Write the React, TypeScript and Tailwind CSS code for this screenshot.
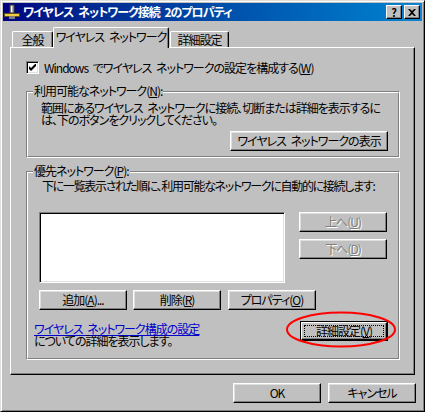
import type { ReactNode } from "react";

const FONT =
  "font-['Noto_Sans_CJK_JP',sans-serif] [font-feature-settings:'palt'] tracking-[-1px] [word-spacing:3px]";

function U({ children }: { children: ReactNode }) {
  return <span className="underline underline-offset-[1px]">{children}</span>;
}

function Btn({
  children,
  className = "",
  disabled = false,
}: {
  children: ReactNode;
  className?: string;
  disabled?: boolean;
}) {
  return (
    <div
      className={`flex h-[20px] w-[88px] shrink-0 items-center justify-center whitespace-nowrap border border-t-white border-l-white border-r-black border-b-black bg-[#c0c0c0] leading-none shadow-[inset_-1px_-1px_0_#808080,inset_1px_1px_0_#dfdfdf] ${
        disabled ? "text-[#808080] [text-shadow:1px_1px_0_#fff]" : "text-black"
      } ${className}`}
    >
      {children}
    </div>
  );
}

function Group({
  label,
  className = "",
  children,
}: {
  label: ReactNode;
  className?: string;
  children: ReactNode;
}) {
  return (
    <div
      className={`relative border border-t-[#808080] border-l-[#808080] border-r-white border-b-white ${className}`}
    >
      <div className="flex h-full flex-col border border-t-white border-l-white border-r-[#808080] border-b-[#808080]">
        {children}
      </div>
      <span className="absolute -top-[7px] left-[6px] whitespace-nowrap bg-[#c0c0c0] px-[1px] leading-[12px]">
        {label}
      </span>
    </div>
  );
}

function Tab({ label, active = false, className = "" }: { label: string; active?: boolean; className?: string }) {
  return (
    <div
      className={`relative flex items-center justify-center whitespace-nowrap rounded-t-[2px] border border-b-0 border-t-white border-l-white border-r-black bg-[#c0c0c0] shadow-[inset_-1px_0_0_#808080] ${
        active ? "z-10 -mb-px h-[21px] pb-[2px]" : "h-[16px]"
      } ${className}`}
    >
      {label}
    </div>
  );
}

function AppIcon() {
  return (
    <svg width="16" height="16" viewBox="0 0 16 16" className="shrink-0">
      <rect x="6" y="1" width="4" height="8" fill="#b0b0b0" stroke="#404040" strokeWidth="1" />
      <rect x="7" y="2" width="1" height="6" fill="#fff" />
      <rect x="0.5" y="9.5" width="15" height="3" fill="#f0d040" stroke="#605020" strokeWidth="1" />
      <rect x="5" y="12" width="6" height="3" fill="#808080" />
    </svg>
  );
}

export default function App() {
  return (
    <div
      className={`${FONT} flex h-[412px] w-[425px] flex-col border border-t-[#dfdfdf] border-l-[#dfdfdf] border-r-black border-b-black bg-[#c0c0c0] p-[2px] text-[12px] text-black shadow-[inset_1px_1px_0_#fff,inset_-1px_-1px_0_#808080]`}
    >
      {/* Title bar */}
      <div className="flex h-[18px] items-center bg-linear-to-r from-[#000080] to-[#1084d0] pl-[1px] pr-[2px]">
        <AppIcon />
        <span className="ml-[3px] whitespace-nowrap font-bold leading-none text-white">
          ワイヤレス ネットワーク接続 2のプロパティ
        </span>
        <div className="ml-auto flex gap-[1px]">
          <div className="flex h-[14px] w-[16px] items-center justify-center border border-t-white border-l-white border-r-black border-b-black bg-[#c0c0c0] text-[11px] font-bold leading-none tracking-normal shadow-[inset_-1px_-1px_0_#808080]">
            ?
          </div>
          <div className="ml-[1px] flex h-[14px] w-[16px] items-center justify-center border border-t-white border-l-white border-r-black border-b-black bg-[#c0c0c0] shadow-[inset_-1px_-1px_0_#808080]">
            <svg width="8" height="7" viewBox="0 0 8 7">
              <path d="M0 0h2l2 2 2-2h2L5 3.5 8 7H6L4 5 2 7H0l3-3.5z" fill="#000" />
            </svg>
          </div>
        </div>
      </div>

      {/* Tabs */}
      <div className="flex h-[26px] items-end pl-[9px]">
        <Tab label="全般" className="w-[41px]" />
        <Tab label="ワイヤレス ネットワーク" active className="w-[116px]" />
        <Tab label="詳細設定" className="ml-[1px] w-[59px]" />
      </div>

      {/* Tab panel */}
      <div className="mx-[7px] flex h-[328px] flex-col border border-t-white border-l-white border-r-black border-b-black pl-[15px] pr-[14px] shadow-[inset_-1px_-1px_0_#808080]">
        <div className="mt-[13px] flex h-[13px] items-center">
          <div className="flex h-[13px] w-[13px] items-center justify-center border border-t-[#808080] border-l-[#808080] border-r-white border-b-white bg-white shadow-[inset_1px_1px_0_#000,inset_-1px_-1px_0_#dfdfdf]">
            <svg width="7" height="7" viewBox="0 0 7 7">
              <path d="M0 2v3l2 2 5-5V-1L2 4z" fill="#000" />
            </svg>
          </div>
          <span className="ml-[5px] whitespace-nowrap leading-none">
            Windows でワイヤレス ネットワークの設定を構成する(<U>W</U>)
          </span>
        </div>

        <Group label={<>利用可能なネットワーク(<U>N</U>):</>} className="mt-[17px] h-[67px]">
          <div className="whitespace-nowrap pl-[13px] pt-[9px] leading-[12px]">
            範囲にあるワイヤレス ネットワークに接続、切断または詳細を表示するに
            <br />
            は、下のボタンをクリックしてください。
          </div>
          <Btn className="mr-[10px] mt-[5px] w-[158px] self-end">ワイヤレス ネットワークの表示</Btn>
        </Group>

        <Group label={<>優先ネットワーク(<U>P</U>):</>} className="mt-[13px] h-[189px]">
          <div className="whitespace-nowrap pl-[14px] pt-[7px] leading-[12px] tracking-[-1.3px]">
            下に一覧表示された順に、利用可能なネットワークに自動的に接続します:
          </div>
          <div className="mt-[20px] flex pl-[11px]">
            <div className="h-[71px] w-[246px] border border-t-[#808080] border-l-[#808080] border-r-white border-b-white bg-white shadow-[inset_1px_1px_0_#000,inset_-1px_-1px_0_#dfdfdf]" />
            <div className="ml-[14px] flex flex-col gap-[7px]">
              <Btn disabled>
                上へ(<U>U</U>)
              </Btn>
              <Btn disabled>
                下へ(<U>D</U>)
              </Btn>
            </div>
          </div>
          <div className="mt-[7px] flex gap-[6px] pl-[11px]">
            <Btn>
              追加(<U>A</U>)...
            </Btn>
            <Btn>
              削除(<U>R</U>)
            </Btn>
            <Btn className="ml-[1px]">
              プロパティ(<U>O</U>)
            </Btn>
          </div>
          <div className="mt-[11px] flex items-start pl-[6px]">
            <div className="mt-[2px] whitespace-nowrap leading-[12px]">
              <span className="text-[#0000cc] underline underline-offset-[1px]">
                ワイヤレス ネットワーク構成の設定
              </span>
              <br />
              についての詳細を表示します。
            </div>
            <div className="relative ml-auto mr-[10px]">
              <div className="h-[20px] w-[88px] border border-black">
                <div className="flex h-full w-full items-center justify-center border border-t-white border-l-white border-r-black border-b-black p-[2px] leading-none shadow-[inset_-1px_-1px_0_#808080]">
                  <div className="flex h-full w-full items-center justify-center whitespace-nowrap border border-dotted border-black">
                    詳細設定(<U>V</U>)
                  </div>
                </div>
              </div>
              <svg
                className="pointer-events-none absolute -left-[14px] -top-[9px] overflow-visible"
                width="110"
                height="36"
                viewBox="0 0 110 36"
              >
                <ellipse cx="55" cy="17.5" rx="54" ry="17" fill="none" stroke="#ff0000" strokeWidth="2" />
              </svg>
            </div>
          </div>
        </Group>
      </div>

      {/* Dialog buttons */}
      <div className="mt-[8px] flex justify-end gap-[7px] pr-[6px]">
        <Btn>OK</Btn>
        <Btn>キャンセル</Btn>
      </div>
    </div>
  );
}
